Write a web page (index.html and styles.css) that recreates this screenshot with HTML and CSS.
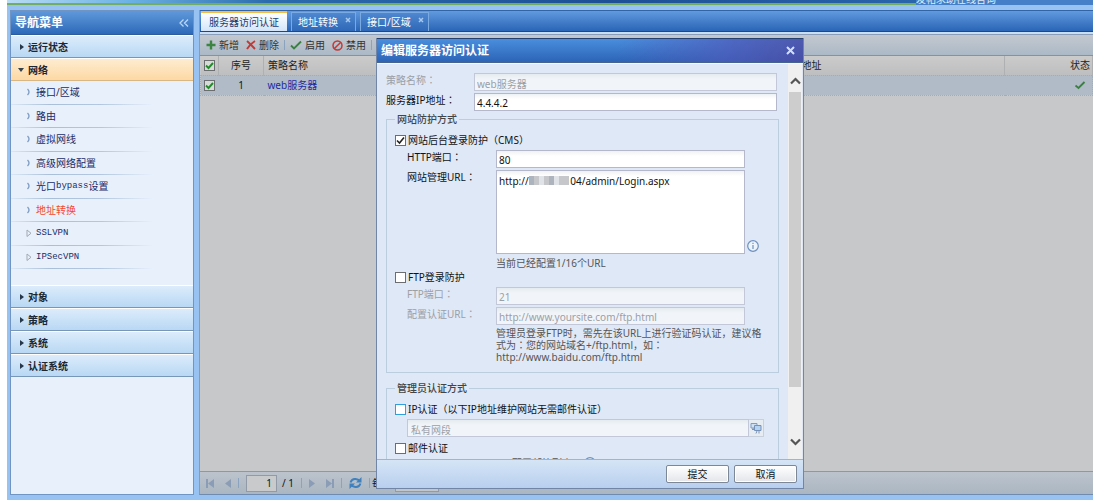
FILE: index.html
```html
<!DOCTYPE html>
<html lang="zh-CN">
<head>
<meta charset="utf-8">
<title>服务器访问认证</title>
<link rel="stylesheet" href="styles.css">
</head>
<body>
<div class="app">
  <header class="banner"><div class="banner-art"></div><a class="banner-link" href="#">发帖求助在线咨询</a></header>
  <div class="columns">
    <nav class="sidebar">
      <div class="side-title">导航菜单
        <button class="collapse" aria-label="收起"><svg width="10" height="8" viewBox="0 0 10 8"><path d="M4.500 .5L1 4l3.500 3.500M9 .5L5.500 4 9 7.500" fill="none" stroke="#b9d6f7" stroke-width="1.300"/></svg></button>
      </div>
      <a class="group" href="#"><i class="arrow"></i>运行状态</a>
      <a class="group open" href="#"><i class="arrow"></i>网络</a>
      <ul class="submenu">
        <li><a href="#"><svg class="chev" viewBox="0 0 6 8"><path d="M1.500 1q3 3 0 6" /></svg>接口/区域</a></li>
        <li><a href="#"><svg class="chev" viewBox="0 0 6 8"><path d="M1.500 1q3 3 0 6" /></svg>路由</a></li>
        <li><a href="#"><svg class="chev" viewBox="0 0 6 8"><path d="M1.500 1q3 3 0 6" /></svg>虚拟网线</a></li>
        <li><a href="#"><svg class="chev" viewBox="0 0 6 8"><path d="M1.500 1q3 3 0 6" /></svg>高级网络配置</a></li>
        <li><a href="#"><svg class="chev" viewBox="0 0 6 8"><path d="M1.500 1q3 3 0 6" /></svg>光口<span class="mono">bypass</span>设置</a></li>
        <li><a class="current" href="#"><svg class="chev" viewBox="0 0 6 8"><path d="M1.500 1q3 3 0 6" /></svg>地址转换</a></li>
        <li><a href="#"><svg class="chev tri" viewBox="0 0 6 8"><path d="M1 1v6.500l4-3.250z"/></svg><span class="mono">SSLVPN</span></a></li>
        <li><a href="#"><svg class="chev tri" viewBox="0 0 6 8"><path d="M1 1v6.500l4-3.250z"/></svg><span class="mono">IPSecVPN</span></a></li>
      </ul>
      <a class="group" href="#"><i class="arrow"></i>对象</a>
      <a class="group" href="#"><i class="arrow"></i>策略</a>
      <a class="group" href="#"><i class="arrow"></i>系统</a>
      <a class="group" href="#"><i class="arrow"></i>认证系统</a>
    </nav>
    <main class="main">
      <div class="tabs">
        <button class="tab active">服务器访问认证</button>
        <button class="tab">地址转换<svg class="tab-x" viewBox="0 0 6 6"><path d="M1 1l4 4M5 1L1 5"/></svg></button>
        <button class="tab">接口/区域<svg class="tab-x" viewBox="0 0 6 6"><path d="M1 1l4 4M5 1L1 5"/></svg></button>
      </div>
      <div class="tab-strip"></div>
      <div class="toolbar">
        <button class="tool"><svg width="10" height="10" viewBox="0 0 10 10"><path d="M5 .5v9M.5 5h9" stroke="#3b8442" stroke-width="2.400"/></svg>新增</button>
        <button class="tool"><svg width="10" height="10" viewBox="0 0 10 10"><path d="M1 1q4 3.500 8 8M9 1Q4 4 1 9" fill="none" stroke="#c23a35" stroke-width="1.900"/></svg>删除</button>
        <i class="sep"></i>
        <button class="tool"><svg width="12" height="10" viewBox="0 0 12 10"><path d="M1 5.500L4 8.500 11 1.500" fill="none" stroke="#3a8040" stroke-width="1.900"/></svg>启用</button>
        <button class="tool"><svg width="11" height="11" viewBox="0 0 11 11"><path d="M2.200 8.800l6.600-6.600" stroke="#c23a35" stroke-width="1.500"/><circle cx="5.500" cy="5.500" r="4.500" fill="none" stroke="#c23a35" stroke-width="1.500"/></svg>禁用</button>
        <i class="sep"></i>
      </div>
      <table class="grid">
        <colgroup><col class="c-check"><col class="c-no"><col class="c-name"><col><col class="c-state"></colgroup>
        <thead><tr><th><input class="tick" type="checkbox" checked aria-label="全选"></th><th class="mid">序号</th><th>策略名称</th><th>服务器IP地址</th><th class="right">状态</th></tr></thead>
        <tbody><tr><td><input class="tick" type="checkbox" checked aria-label="选择"></td><td class="mid">1</td><td><a class="name" href="#">web服务器</a></td><td></td><td class="right"><svg class="ok" viewBox="0 0 12 10"><path d="M1.500 5.500L4.500 8 10.500 2" fill="none" stroke="#3a8040" stroke-width="1.800"/></svg></td></tr></tbody>
      </table>
      <div class="blank"></div>
      <footer class="pager">
        <button class="pg" aria-label="首页"><svg width="9" height="9" viewBox="0 0 9 9"><path d="M0 0h2v9H0zM8 0v9L2 4.500z"/></svg></button>
        <button class="pg" aria-label="上一页"><svg width="6" height="9" viewBox="0 0 6 9"><path d="M6 0v9L0 4.500z"/></svg></button>
        <i class="sep"></i>
        <input class="page-no" value="1" aria-label="页码"><span>/ 1</span>
        <i class="sep"></i>
        <button class="pg" aria-label="下一页"><svg width="6" height="9" viewBox="0 0 6 9"><path d="M0 0v9l6-4.500z"/></svg></button>
        <button class="pg" aria-label="末页"><svg width="9" height="9" viewBox="0 0 9 9"><path d="M7 0h2v9H7zM1 0v9l6-4.500z"/></svg></button>
        <i class="sep"></i>
        <button class="pg" aria-label="刷新"><svg width="13" height="12" viewBox="0 0 13 12"><path d="M1.500 5.500Q3 1.500 6.500 2t3.500 2M11.500 6.500Q10 10.500 6.500 10T3 8" fill="none" stroke="#3f80bd" stroke-width="2"/><path d="M12.500 0v5.500H7zM.5 12V6.500H6z" fill="#3f80bd"/></svg></button>
        <i class="sep"></i>
        <label class="per">每页<select class="per-size"><option>50</option></select></label>
      </footer>
    </main>
  </div>
</div>

<div class="dialog" role="dialog" aria-labelledby="dlg-title">
  <div class="dlg-head"><h1 id="dlg-title">编辑服务器访问认证</h1>
    <button class="dlg-close" aria-label="关闭"><svg width="9" height="9" viewBox="0 0 9 9"><path d="M1 1l7 7M8 1L1 8" stroke="#d3e0f8" stroke-width="2"/></svg></button></div>
  <div class="dlg-mid">
    <form class="form" id="auth-form">
      <div class="row off"><label for="f-name">策略名称<span class="pt" lang="zh-TW">：</span></label><input id="f-name" value="web服务器" disabled></div>
      <div class="row"><label for="f-ip">服务器IP地址<span class="pt" lang="zh-TW">：</span></label><input id="f-ip" value="4.4.4.2"></div>
      <fieldset class="box">
        <legend>网站防护方式</legend>
        <label class="check"><input type="checkbox" checked>网站后台登录防护（CMS）</label>
        <div class="row sub"><label for="f-port">HTTP端口<span class="pt" lang="zh-TW">：</span></label><input id="f-port" value="80"></div>
        <div class="row sub tall"><label for="f-url">网站管理URL<span class="pt" lang="zh-TW">：</span></label>
          <div class="area"><textarea id="f-url">http://                04/admin/Login.aspx</textarea><span class="mosaic"><i></i><i></i><i></i><i></i><i></i><i></i><i></i><i></i></span></div>
          <svg class="info" viewBox="0 0 12 12"><circle cx="6" cy="6" r="5.300"/><path d="M6 5v4M6 2.700v1.400"/></svg></div>
        <p class="hint count">当前已经配置1/16个URL</p>
        <label class="check"><input type="checkbox">FTP登录防护</label>
        <div class="row sub off"><label for="f-ftp">FTP端口<span class="pt" lang="zh-TW">：</span></label><input id="f-ftp" value="21" disabled></div>
        <div class="row sub off"><label for="f-auth">配置认证URL<span class="pt" lang="zh-TW">：</span></label><input id="f-auth" value="http://www.yoursite.com/ftp.html" disabled></div>
        <p class="hint">管理员登录FTP时，需先在该URL上进行验证码认证，建议格式为<span class="pt" lang="zh-TW">：</span>您的网站域名+/ftp.html，如<span class="pt" lang="zh-TW">：</span><br>http://www.baidu.com/ftp.html</p>
      </fieldset>
      <fieldset class="box second">
        <legend>管理员认证方式</legend>
        <label class="check"><input class="focus" type="checkbox">IP认证（以下IP地址维护网站无需邮件认证）</label>
        <div class="picker"><input value="私有网段" aria-label="私有网段" disabled><button type="button" aria-label="选择网段"><svg width="12" height="12" viewBox="0 0 12 12"><path d="M1 1.500h6v4.500H1z" fill="#cfe0f2" stroke="#7d9dc5"/><path d="M4.500 3.500h6.500v5H4.500z" fill="#b4d2f2" stroke="#7591b8"/><path d="M2 7.500h2M3 6v2M7 9l-1 2.500M9 9v2.500" stroke="#8093ae"/></svg></button></div>
        <label class="check"><input type="checkbox">邮件认证</label>
        <div class="mail-list">配置邮箱列表<svg class="info" viewBox="0 0 12 12"><circle cx="6" cy="6" r="5.300"/><path d="M6 5v4M6 2.700v1.400"/></svg></div>
      </fieldset>
    </form>
    <div class="scroll"><svg width="11" height="8" viewBox="0 0 11 8"><path d="M1 6.500L5.500 2 10 6.500"/></svg><div class="thumb"></div><svg width="11" height="8" viewBox="0 0 11 8"><path d="M1 1.500L5.500 6 10 1.500"/></svg></div>
  </div>
  <div class="dlg-foot"><button class="btn" form="auth-form">提交</button><button class="btn">取消</button></div>
</div>
</body>
</html>
```
FILE: styles.css
```css
* { box-sizing: border-box; }
body {
  margin: 0; height: 100vh; overflow: hidden; background: #fff; position: relative;
  font: 10px/12px "Noto Sans", "Noto Sans CJK SC", sans-serif; color: #111;
}
button, input, textarea, select { font: inherit; color: inherit; margin: 0; padding: 0; border: 0; background: none; border-radius: 0; }
a { color: inherit; text-decoration: none; }
svg { display: block; flex: none; }
/* full-width punctuation centred in its cell */
.pt { font-family: "Noto Sans", "Noto Sans CJK TC", sans-serif; }

.app { margin-left: 7px; height: 100%; background: #97c2f1; display: flex; flex-direction: column; }
.banner { height: 5px; display: flex; overflow: hidden; background: #447fc7; }
.banner-art { width: 909px; border-bottom: 2px solid #73ad62; background: linear-gradient(90deg, #b8dcf4 0, #6eb3e5 120px, #2c6cae 260px, #1d4f96 600px, #2a64ab); }
.banner-link { color: #e3edf8; line-height: 12px; margin-top: -7px; white-space: nowrap; }
.columns { flex: 1; display: flex; gap: 5px; padding: 5px 0 5px 3px; min-height: 0; }

.sidebar { width: 184px; border: 1px solid #7094c4; background: #e8f0fc; display: flex; flex-direction: column; }
.side-title {
  height: 24px; padding: 0 4px 0 4px; display: flex; align-items: center; justify-content: space-between;
  font-size: 12px; font-weight: bold; color: #fff; background: linear-gradient(#6099da, #2c69b9); border-bottom: 1px solid #2d5b9c;
}
.group {
  height: 23px; display: flex; align-items: center; gap: 4px; padding-left: 9px; font-weight: bold; color: #1c2733;
  background: linear-gradient(#dcecfb, #b9d8f4); border-top: 1px solid #fff; border-bottom: 1px solid #7797b9;
}
.arrow { border: 3px solid transparent; border-left: 4px solid #26374a; border-right: 0; }
.open { background: linear-gradient(#feecd0, #fdd9a4); border-bottom-color: #d9b785; padding-left: 7px; }
.open .arrow { border: 3px solid transparent; border-top: 4px solid #34404a; border-bottom: 0; }
.submenu { list-style: none; margin: 0; padding: 0 0 16px; height: 204px; display: flex; flex-direction: column; color: #1b2c66; }
.submenu li { flex: 1; display: flex; border-bottom: 1px solid; border-image: linear-gradient(90deg, #dce8f6, #a9bfd8 40px, #b3c8e0 90px, transparent 142px) 1; }
.submenu a { display: flex; align-items: center; padding-left: 15px; }
.chev { width: 6px; height: 8px; margin-right: 4px; fill: none; stroke: #7f9dc2; stroke-width: 1.3; }
.tri { stroke: #a3a9b0; stroke-width: 1; }
.mono { font-family: "Liberation Mono", monospace; font-size: 9px; }
.current { color: #f4472e; }

.main { flex: 1; min-width: 0; display: flex; flex-direction: column; background: #c7c8ca; border-left: 1px solid #7f9cc4; border-bottom: 1px solid #6f8cb0; }
.tabs { height: 21px; display: flex; align-items: flex-end; gap: 4px; background: linear-gradient(#619ade, #2a65b6); border-top: 1px solid #3265a8; padding-left: 1px; }
.tab { height: 19px; display: flex; gap: 7px; padding: 0 4px 0 6px; line-height: 19px; color: #fff; background: linear-gradient(#4f88cf, #2e68b8); border: 1px solid #7aaae2; border-bottom: 0; }
.tab.active { height: 20px; padding: 0 8px; color: #1d3c70; border: 0; border-top: 2px solid #f4bd4a; background: linear-gradient(#fff, #d3e5fa); }
.tab-x { width: 6px; height: 6px; margin-top: 4px; stroke: #a9c8ee; stroke-width: 1.5; }
.tab-strip { height: 4px; background: #c9dff8; border-top: 1px solid #22467f; border-bottom: 1px solid #8a9db8; }
.toolbar { height: 21px; display: flex; align-items: center; gap: 7px; padding-left: 6px; background: linear-gradient(#c4c8cf, #abb9c7); border-bottom: 1px solid #8292aa; color: #333; }
.tool { display: flex; align-items: center; gap: 3px; white-space: nowrap; }
.sep { width: 1px; height: 10px; background: #8ca3bf; flex: none; }
.toolbar .sep { margin: 0 -2px; }

.grid { width: 100%; table-layout: fixed; border-collapse: collapse; }
.c-check { width: 18px; } .c-no { width: 45px; } .c-name { width: 494px; } .c-state { width: 88px; }
.grid th, .grid td { height: 20px; padding: 0 4px; text-align: left; font-weight: normal; }
.grid th { height: 19px; background: linear-gradient(#cbcbcc, #bdbebf); border-right: 1px solid #aeb0b2; color: #222; }
.grid tbody { background: #b1bac7; border: 1px dotted #a2adbb; }
.grid th:first-child, .grid td:first-child { padding: 0 3px; }
.grid .mid { text-align: center; } .grid .right { text-align: right; padding-right: 2px; }
.name { color: #1c2ca4; }
.ok { width: 12px; height: 10px; margin: 0 4px 0 auto; }
input[type=checkbox] { appearance: none; display: block; flex: none; width: 11px; height: 11px; border: 1px solid #6b6d70; background: #fff; }
input[type=checkbox]:checked { background: #fff url("data:image/svg+xml,%3Csvg xmlns='http://www.w3.org/2000/svg' viewBox='0 0 9 9'%3E%3Cpath d='M1 4.500l2.500 2.500L8 1.500' fill='none' stroke='%23222' stroke-width='1.600'/%3E%3C/svg%3E"); }
input.tick:checked { background: #d7dbd7 url("data:image/svg+xml,%3Csvg xmlns='http://www.w3.org/2000/svg' viewBox='0 0 9 9'%3E%3Cpath d='M1 4.500l2.500 2.500L8 2' fill='none' stroke='%23228a2a' stroke-width='1.900'/%3E%3C/svg%3E"); }
input[type=checkbox].focus { border-color: #2f9fe0; }
.blank { flex: 1; }
.pager { height: 23px; display: flex; align-items: center; gap: 10px; padding-left: 6px; border-top: 1px solid #8299b8; background: linear-gradient(#bcc3cc, #aab6c2); }
.pager .sep { margin: 0 -3px; }
.pg { fill: #8b9db6; }
.page-no { width: 31px; height: 17px; margin-right: -5px; border: 1px solid #919aa6; background: #c9cacb; text-align: right; padding-right: 4px; }
.per { display: flex; align-items: center; gap: 3px; margin-left: -5px; white-space: nowrap; }
.per-size { width: 44px; height: 17px; border: 1px solid #919aa6; background: #c4c7ca; }

.dialog { position: absolute; left: 376px; top: 38px; bottom: 11px; width: 428px; display: flex; flex-direction: column; background: #dfe8f7; border: 1px solid #7186a6; }
.dlg-head { height: 25px; display: flex; align-items: center; justify-content: space-between; padding: 0 8px 0 4px; border-top: 1px solid #24416f; border-bottom: 1px solid #476390; margin: -1px 0 0; color: #fff;
  background: linear-gradient(90deg, transparent 240px, #5058b8aa 350px, #5047a0bb), linear-gradient(#4a8edd, #2c64b7); }
.dlg-head h1 { margin: 0; font-size: 12px; line-height: 16px; font-weight: bold; }
.dlg-mid { flex: 1; min-height: 0; display: flex; border-top: 1px solid #f5f9ff; }
.form { flex: 1; min-width: 0; overflow: hidden; padding: 9px 9px 0 9px; }
.row { display: flex; margin-bottom: 2px; padding-right: 2px; }
.row label { width: 88px; line-height: 14px; white-space: nowrap; flex: none; }
.row input, .area { flex: 1; min-width: 0; border: 1px solid #b5b8ca; background: linear-gradient(#eef1f4, #fff 5px); }
.row input { height: 18px; padding: 2px 2px 0; }
.off { color: #9b9fa6; }
.row.off input, .picker input { background: linear-gradient(#e6ebf0, #f1f5fa 5px); border-color: #c2c8d8; }
.box { margin: 1px 0 0; padding: 6px 10px 9px 8px; border: 1px solid #bccde0; min-width: 0; }
.box legend { padding: 0 2px; color: #444; font-weight: 500; }
.check { display: flex; align-items: center; gap: 2px; height: 18px; margin-bottom: 1px; width: max-content; }
.sub { padding: 0 23px 0 12px; }
.sub label { width: 89px; }
.tall { position: relative; margin: 0; }
.area { height: 84px; position: relative; }
.area textarea { display: block; width: 100%; height: 100%; padding: 4px 2px; resize: none; line-height: 12px; white-space: pre; overflow: hidden; }
.mosaic { position: absolute; left: 32px; top: 5px; width: 40px; height: 9px; display: grid; grid-template-columns: repeat(8, 1fr); }
.mosaic i { background: #c5c7cb; }
.mosaic i:nth-child(3n) { background: #e0e3e8; } .mosaic i:nth-child(4n+1) { background: #adb4bd; }
.info { width: 12px; height: 12px; fill: #edf4fc; stroke: #6e91bf; stroke-width: 1.2; }
.tall .info { position: absolute; right: 9px; bottom: 2px; }
.hint { margin: 0 0 0 101px; color: #555; line-height: 12px; }
.count { margin-top: 3px; margin-bottom: -1px; }
.second { margin-top: 9px; padding-bottom: 30px; }
.picker { display: flex; margin: 0 4px 2px 12px; }
.picker input { flex: 1; min-width: 0; height: 18px; padding: 2px 3px 0; border: 1px solid #c2c8d8; color: #9b9fa6; }
.picker button { width: 15px; border: 1px solid #c8d0dd; border-left: 0; background: #e7ecf3; display: grid; place-items: center; }
.mail-list { display: flex; gap: 12px; margin: -1px 0 0 117px; color: #555; }
.scroll { width: 15px; flex: none; display: flex; flex-direction: column; align-items: center; background: #f0f0f0; padding: 13px 1px 13px; gap: 7px; border-right: 1px solid #dfe6ef; }
.scroll svg { fill: none; stroke: #555; stroke-width: 2.2; }
.thumb { width: 100%; height: 295px; margin-bottom: auto; background: #cdcdcd; }
.dlg-foot { height: 29px; display: flex; align-items: center; justify-content: flex-end; gap: 5px; padding-right: 6px; border-top: 1px solid #9fb5cf; background: linear-gradient(#d5e5f6, #b8cfee); }
.btn { width: 63px; height: 18px; border: 1px solid #7c8798; border-radius: 2px; background: linear-gradient(#fff, #e3e5ea); box-shadow: inset 0 0 0 1px #fff; }
```
